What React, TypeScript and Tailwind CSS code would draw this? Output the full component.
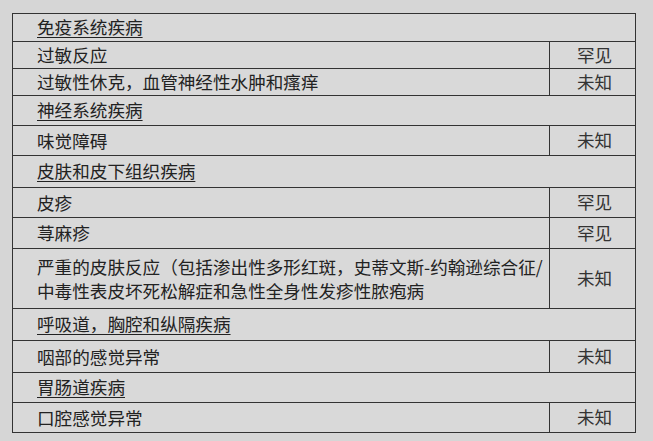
type Row =
  | { kind: "head"; text: string; h: string }
  | { kind: "item"; text: React.ReactNode; freq: string; h: string };

const rows: Row[] = [
  { kind: "head", text: "免疫系统疾病", h: "h-[28px]" },
  { kind: "item", text: "过敏反应", freq: "罕见", h: "h-[27px]" },
  { kind: "item", text: "过敏性休克，血管神经性水肿和瘙痒", freq: "未知", h: "h-[27px]" },
  { kind: "head", text: "神经系统疾病", h: "h-[30px]" },
  { kind: "item", text: "味觉障碍", freq: "未知", h: "h-[30px]" },
  { kind: "head", text: "皮肤和皮下组织疾病", h: "h-[32px]" },
  { kind: "item", text: "皮疹", freq: "罕见", h: "h-[30px]" },
  { kind: "item", text: "荨麻疹", freq: "罕见", h: "h-[31px]" },
  {
    kind: "item",
    text: (
      <>
        严重的皮肤反应（包括渗出性多形红斑，史蒂文斯-约翰逊综合征/
        <br />
        中毒性表皮坏死松解症和急性全身性发疹性脓疱病
      </>
    ),
    freq: "未知",
    h: "h-[60px]",
  },
  { kind: "head", text: "呼吸道，胸腔和纵隔疾病", h: "h-[32px]" },
  { kind: "item", text: "咽部的感觉异常", freq: "未知", h: "h-[32px]" },
  { kind: "head", text: "胃肠道疾病", h: "h-[30px]" },
  { kind: "item", text: "口腔感觉异常", freq: "未知", h: "h-[30px]" },
];

export default function App() {
  return (
    <div
      className="h-[441px] w-[653px] overflow-hidden bg-[#d6d6d6] pl-[12px] pt-[13px] text-[#222]"
      style={{ fontFamily: '"Noto Sans CJK SC", "Noto Sans", sans-serif' }}
    >
      <div className="w-[624px] border-t border-l border-r border-[#333] bg-[#d9d9d9]">
        {rows.map((r, i) =>
          r.kind === "head" ? (
            <div key={i} className={`box-border flex items-center border-b border-[#333] pl-[24px] text-[17.6px] ${r.h}`}>
              <span className="underline decoration-1 underline-offset-[3px]">{r.text}</span>
            </div>
          ) : (
            <div key={i} className={`box-border flex border-b border-[#333] text-[17.6px] ${r.h}`}>
              <div className="flex flex-1 items-center pl-[24px] leading-[24px]">{r.text}</div>
              <div className="flex w-[86px] items-center justify-center border-l border-[#333] pl-[4px] text-[#333]">
                {r.freq}
              </div>
            </div>
          )
        )}
      </div>
    </div>
  );
}
